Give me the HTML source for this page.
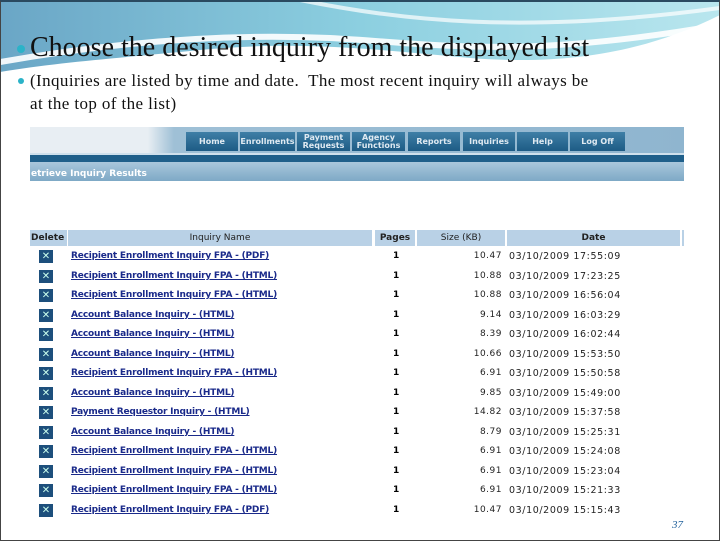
<!DOCTYPE html>
<html><head><style>
body{margin:0;width:720px;height:540px;overflow:hidden;background:#fff;position:relative;font-family:"Liberation Serif",serif}
.a{position:absolute}
.t{font-family:"DejaVu Sans",sans-serif;font-size:9px}
.btn{position:absolute;top:132px;height:19px;background:linear-gradient(#3f7fa6,#1d5b85);color:#dfeaf2;font:bold 8px "DejaVu Sans",sans-serif;text-align:center;display:flex;align-items:center;justify-content:center;line-height:8px}
.row{position:absolute;left:30px;width:654px;height:18px;font:bold 9px "DejaVu Sans",sans-serif}
.row .x{position:absolute;left:9px;top:2px;width:14px;height:13px;background:#1d4f7c;color:#cfe;font-size:10px;text-align:center;line-height:13px;font-weight:normal}
.row .n{position:absolute;left:41px;top:3px;color:#1a2a8a;text-decoration:underline;letter-spacing:-0.2px}
.row .p{position:absolute;left:363px;top:3px}
.row .s{position:absolute;right:182px;top:3px;color:#222;font-weight:normal;letter-spacing:0.5px}
.row .d{position:absolute;left:479px;top:3px;color:#222;font-weight:normal;font-size:9.5px;letter-spacing:0.6px}
.hd{position:absolute;top:230px;height:16px;background:#b9d1e6;font:9px "DejaVu Sans",sans-serif;text-align:center;line-height:16px;color:#222}
</style></head><body>
<svg class="a" style="left:0;top:0" width="720" height="130">
<defs><linearGradient id="g" x1="0" x2="1"><stop offset="0" stop-color="#6aa6c6"/><stop offset="0.5" stop-color="#8ccfe0"/><stop offset="1" stop-color="#b9e6ee"/></linearGradient></defs>
<path d="M0 0H720V15C640 55 560 65 470 58C380 50 300 40 200 50C120 58 60 62 0 72Z" fill="url(#g)"/>
<path d="M0 62C80 48 200 32 330 38C440 44 520 60 720 25" stroke="#fff" stroke-width="6" fill="none" opacity="0.9"/>
<path d="M300 0C400 20 520 35 720 8" stroke="#fff" stroke-width="4" fill="none" opacity="0.7"/>
</svg>
<div class="a" style="left:0;top:0;width:718px;height:538px;border:1px solid #444;border-top:2px solid #2a4a60"></div>
<div class="a" style="left:17px;top:45px;width:8px;height:8px;border-radius:50%;background:#2bb3c8"></div>
<div class="a" style="left:30px;top:32px;font-size:28px;color:#111;white-space:nowrap">Choose the desired inquiry from the displayed list</div>
<div class="a" style="left:18px;top:78px;width:6px;height:6px;border-radius:50%;background:#2bb3c8"></div>
<div class="a" style="left:30px;top:69px;font-size:17px;line-height:23px;color:#111;white-space:nowrap;letter-spacing:0.4px">(Inquiries are listed by time and date.&nbsp; The most recent inquiry will always be<br>at the top of the list)</div>

<div class="a" style="left:30px;top:127px;width:654px;height:393px;background:#fff"></div>
<div class="a" style="left:30px;top:127px;width:654px;height:26px;background:linear-gradient(90deg,#e8eef3 0,#e8eef3 18%,#9fc0d6 22%,#8fb5cf 100%)"></div>
<div class="a" style="left:30px;top:153px;width:654px;height:3px;background:#cfe0ec"></div>
<div class="a" style="left:30px;top:155px;width:654px;height:7px;background:#1f5f8a"></div>
<div class="a" style="left:30px;top:162px;width:654px;height:19px;background:linear-gradient(#a9c7dc,#7ea9c6)"></div>
<div class="a t" style="left:31px;top:169px;color:#fff;font-weight:bold">etrieve Inquiry Results</div>
<div class="btn" style="left:186px;width:52px">Home</div>
<div class="btn" style="left:240px;width:55px">Enrollments</div>
<div class="btn" style="left:297px;width:53px">Payment<br>Requests</div>
<div class="btn" style="left:352px;width:53px">Agency<br>Functions</div>
<div class="btn" style="left:408px;width:52px">Reports</div>
<div class="btn" style="left:463px;width:52px">Inquiries</div>
<div class="btn" style="left:517px;width:51px">Help</div>
<div class="btn" style="left:570px;width:55px">Log Off</div>

<div class="hd" style="left:30px;width:36px;font-weight:bold;text-align:left;padding-left:1px">Delete</div>
<div class="hd" style="left:68px;width:304px">Inquiry Name</div>
<div class="hd" style="left:375px;width:40px;font-weight:bold">Pages</div>
<div class="hd" style="left:417px;width:88px">Size (KB)</div>
<div class="hd" style="left:507px;width:173px;font-weight:bold">Date</div>
<div class="hd" style="left:682px;width:2px"></div>

<div class="row" style="top:248px"><span class="x">✕</span><span class="n">Recipient Enrollment Inquiry FPA - (PDF)</span><span class="p">1</span><span class="s">10.47</span><span class="d">03/10/2009 17:55:09</span></div>
<div class="row" style="top:268px"><span class="x">✕</span><span class="n">Recipient Enrollment Inquiry FPA - (HTML)</span><span class="p">1</span><span class="s">10.88</span><span class="d">03/10/2009 17:23:25</span></div>
<div class="row" style="top:287px"><span class="x">✕</span><span class="n">Recipient Enrollment Inquiry FPA - (HTML)</span><span class="p">1</span><span class="s">10.88</span><span class="d">03/10/2009 16:56:04</span></div>
<div class="row" style="top:307px"><span class="x">✕</span><span class="n">Account Balance Inquiry - (HTML)</span><span class="p">1</span><span class="s">9.14</span><span class="d">03/10/2009 16:03:29</span></div>
<div class="row" style="top:326px"><span class="x">✕</span><span class="n">Account Balance Inquiry - (HTML)</span><span class="p">1</span><span class="s">8.39</span><span class="d">03/10/2009 16:02:44</span></div>
<div class="row" style="top:346px"><span class="x">✕</span><span class="n">Account Balance Inquiry - (HTML)</span><span class="p">1</span><span class="s">10.66</span><span class="d">03/10/2009 15:53:50</span></div>
<div class="row" style="top:365px"><span class="x">✕</span><span class="n">Recipient Enrollment Inquiry FPA - (HTML)</span><span class="p">1</span><span class="s">6.91</span><span class="d">03/10/2009 15:50:58</span></div>
<div class="row" style="top:385px"><span class="x">✕</span><span class="n">Account Balance Inquiry - (HTML)</span><span class="p">1</span><span class="s">9.85</span><span class="d">03/10/2009 15:49:00</span></div>
<div class="row" style="top:404px"><span class="x">✕</span><span class="n">Payment Requestor Inquiry - (HTML)</span><span class="p">1</span><span class="s">14.82</span><span class="d">03/10/2009 15:37:58</span></div>
<div class="row" style="top:424px"><span class="x">✕</span><span class="n">Account Balance Inquiry - (HTML)</span><span class="p">1</span><span class="s">8.79</span><span class="d">03/10/2009 15:25:31</span></div>
<div class="row" style="top:443px"><span class="x">✕</span><span class="n">Recipient Enrollment Inquiry FPA - (HTML)</span><span class="p">1</span><span class="s">6.91</span><span class="d">03/10/2009 15:24:08</span></div>
<div class="row" style="top:463px"><span class="x">✕</span><span class="n">Recipient Enrollment Inquiry FPA - (HTML)</span><span class="p">1</span><span class="s">6.91</span><span class="d">03/10/2009 15:23:04</span></div>
<div class="row" style="top:482px"><span class="x">✕</span><span class="n">Recipient Enrollment Inquiry FPA - (HTML)</span><span class="p">1</span><span class="s">6.91</span><span class="d">03/10/2009 15:21:33</span></div>
<div class="row" style="top:502px"><span class="x">✕</span><span class="n">Recipient Enrollment Inquiry FPA - (PDF)</span><span class="p">1</span><span class="s">10.47</span><span class="d">03/10/2009 15:15:43</span></div>
<div class="a" style="left:672px;top:519px;font:italic 11px 'Liberation Serif',serif;color:#1f5f9a">37</div>
</body></html>
